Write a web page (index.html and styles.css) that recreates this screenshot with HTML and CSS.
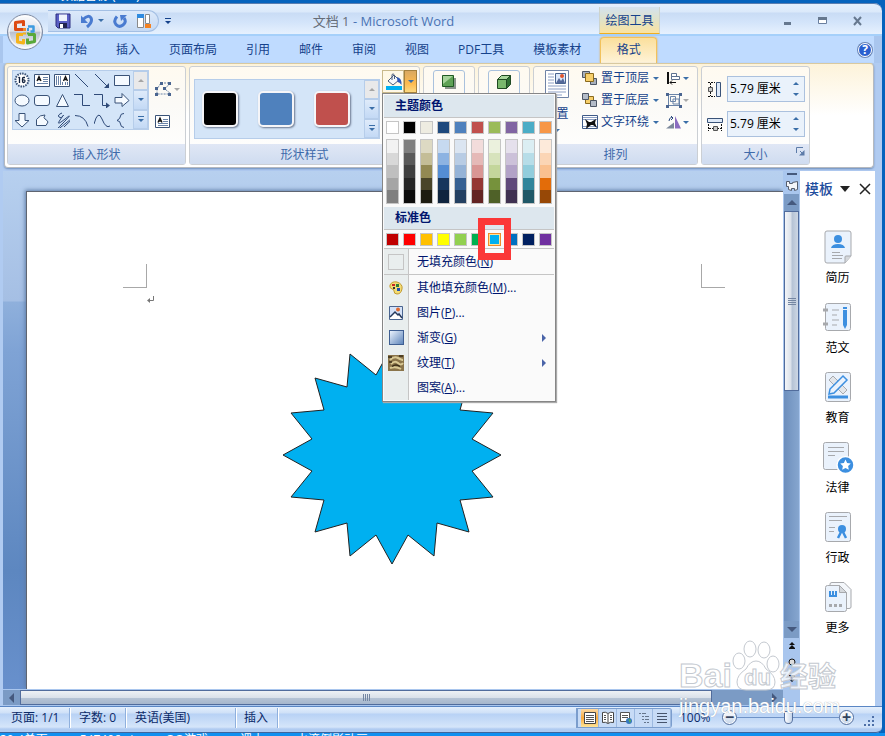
FILE: index.html
```html
<!DOCTYPE html>
<html lang="zh-CN">
<head>
    <meta charset="UTF-8">
    <meta name="viewport" content="width=device-width, initial-scale=1.0">
    <title>文档 1 - Microsoft Word</title>
    <link rel="stylesheet" href="styles.css">
</head>
<body>
    <div class="desktop-top"><span>数据备份 (001)</span></div>

    <div class="window">
        <!-- Title bar -->
        <header class="titlebar">
            <button class="office" aria-label="Office">
                <svg width="38" height="38" viewBox="0 0 38 38">
                    <defs>
                        <linearGradient id="orb" x1="0" y1="0" x2="0" y2="1">
                            <stop offset="0" stop-color="#fdfdfe"/>
                            <stop offset=".48" stop-color="#dde1ea"/>
                            <stop offset=".5" stop-color="#b9c0d0"/>
                            <stop offset="1" stop-color="#fafbfd"/>
                        </linearGradient>
                    </defs>
                    <circle cx="19" cy="19" r="17.500" fill="url(#orb)" stroke="#7e8ba3"/>
                    <circle cx="19" cy="19" r="16" fill="none" stroke="#fff" opacity=".8"/>
                    <g fill="none" stroke-width="3" stroke-linejoin="round">
                        <path d="M17 16.500H9.500V9.500L17.500 8.500V13" stroke="#dd4a12"/>
                        <path d="M22 13.500H27.500V18.500H24.500" stroke="#3d9be0" stroke-width="2.500"/>
                        <path d="M17 21.500H11.500V29L17.500 30V26" stroke="#f5b31c"/>
                        <path d="M22 21.500H28.500V28.500L21.500 30V25.500" stroke="#5aa93a"/>
                    </g>
                    <path d="M17 15h3v3h-3z" fill="#f08a2a"/>
                    <path d="M21 15h2v3h-2z" fill="#3d9be0"/>
                    <path d="M17 19.500h3v2h-3z" fill="#f5b31c"/>
                    <path d="M21 19.500h2v2h-2z" fill="#5aa93a"/>
                </svg>
            </button>
            <div class="quick">
                <button aria-label="保存">
                    <svg width="16" height="16" viewBox="0 0 16 16">
                        <path d="M1 1h14v14H3l-2-2z" fill="#5a5fc4" stroke="#2c2f80"/>
                        <path d="M4 1.500h8V8H4z" fill="#eef3fc"/>
                        <path d="M4 10h8v5H4z" fill="#1f2350"/>
                        <path d="M5 11h3v4H5z" fill="#fff"/>
                    </svg>
                </button>
                <button class="undo" aria-label="撤消">
                    <svg width="14" height="16" viewBox="0 0 14 16">
                        <path d="M3 6.500Q9 1 11 5T7 14" fill="none" stroke="#4a7bd0" stroke-width="3"/>
                        <path d="M1 2.500V10h7z" fill="#4a7bd0"/>
                    </svg>
                    <i class="arrow"></i>
                </button>
                <button aria-label="重复">
                    <svg width="14" height="16" viewBox="0 0 14 16">
                        <path d="M4 3.500Q0 8 3 11.500T10 12T11 5" fill="none" stroke="#4a7bd0" stroke-width="3"/>
                        <path d="M7 2h7l-6 6z" fill="#4a7bd0"/>
                    </svg>
                </button>
                <button aria-label="布局">
                    <svg width="16" height="16" viewBox="0 0 16 16">
                        <path d="M1.500 1.500h6v13h-6zM9.500 1.500h4v9h-4z" fill="#fff" stroke="#8a8a8a"/>
                        <path d="M1 1h7v4H1z" fill="#2f8be0"/>
                        <path d="M9 11h6v4H9z" fill="#f58220"/>
                    </svg>
                </button>
            </div>
            <button class="customize" aria-label="自定义快速访问工具栏"><i class="bar"></i><i class="arrow"></i></button>
            <h1 class="title"><span>文档 1</span> - Microsoft Word</h1>
            <div class="context">绘图工具</div>
            <div class="controls">
                <button aria-label="最小化"><svg width="12" height="12"><path d="M2 7h7v3H2z" fill="#66788f"/></svg></button>
                <button aria-label="最大化"><svg width="12" height="12"><path d="M1.500 2.500h8v6h-8z" fill="#fff" stroke="#6a7f9f"/><path d="M1 2h9v3H1z" fill="#66788f"/></svg></button>
                <button aria-label="关闭"><svg width="12" height="12"><path d="M2 2l7 8M9 2L2 10" stroke="#66788f" stroke-width="2"/></svg></button>
            </div>
        </header>

        <!-- Ribbon tabs -->
        <nav class="tabs">
            <a href="#">开始</a>
            <a href="#">插入</a>
            <a href="#">页面布局</a>
            <a href="#">引用</a>
            <a href="#">邮件</a>
            <a href="#">审阅</a>
            <a href="#">视图</a>
            <a href="#">PDF工具</a>
            <a href="#">模板素材</a>
            <a href="#" class="active">格式</a>
            <button class="help" aria-label="帮助">?</button>
        </nav>

        <!-- Ribbon -->
        <div class="ribbon">
            <section class="group insert">
                <div class="group-body">
                    <div class="gallery shapes">
                        <div class="shape-grid">
                            <button aria-label="十六角星"><svg width="16" height="16" viewBox="0 0 16 16"><circle cx="8" cy="8" r="6.500" fill="#fff" stroke="#3a5378" stroke-width="2" stroke-dasharray="1.500 1"/><path d="M5.500 5v6M4.500 6l1-1M11 5.500H9.500Q8.500 5.500 8.500 7v2.500Q8.500 10.500 9.700 10.500T11 9T8.500 8" fill="none" stroke="#10203c" stroke-width="1.300"/></svg></button>
                            <button aria-label="文本框"><svg width="16" height="16" viewBox="0 0 16 16"><path d="M.5 2.500h15v12H.5z" fill="#fff" stroke="#3a5378"/><path d="M3 9l2-4.500L7 9M4 7.500h2" fill="none" stroke="#111" stroke-width="1.300"/><path d="M9 5.500h5M9 7.500h5M9 9.500h5M3 11.500h11" stroke="#6a84a8"/></svg></button>
                            <button aria-label="竖排文本框"><svg width="16" height="16" viewBox="0 0 16 16"><path d="M.5 2.500h15v12H.5z" fill="#fff" stroke="#3a5378"/><path d="M9.500 9l2-4.500L13.500 9M10 7.500h3" fill="none" stroke="#111" stroke-width="1.300"/><path d="M2.500 4v9M4.500 4v9M6.500 4v9M8.500 10v3M11.500 10v3M13.500 10v3" stroke="#6a84a8"/></svg></button>
                            <button aria-label="直线"><svg width="16" height="16" viewBox="0 0 16 16"><path d="M1 2l13 13" stroke="#2f4a78"/></svg></button>
                            <button aria-label="箭头"><svg width="16" height="16" viewBox="0 0 16 16"><path d="M1 2l12 12" stroke="#2f4a78"/><path d="M15 16v-5l-5 5z" fill="#2f4a78"/></svg></button>
                            <button aria-label="矩形"><svg width="16" height="16" viewBox="0 0 16 16"><path d="M.5 3.500h15v10H.5z" fill="#f5faff" stroke="#3a5378"/></svg></button>
                            <button aria-label="椭圆"><svg width="16" height="16" viewBox="0 0 16 16"><ellipse cx="8" cy="8.500" rx="7" ry="5.500" fill="#f5faff" stroke="#3a5378"/></svg></button>
                            <button aria-label="圆角矩形"><svg width="16" height="16" viewBox="0 0 16 16"><rect x=".5" y="3.500" width="15" height="10" rx="2.500" fill="#f5faff" stroke="#3a5378"/></svg></button>
                            <button aria-label="三角形"><svg width="16" height="16" viewBox="0 0 16 16"><path d="M8.500 2.500l6 12h-12z" fill="#f5faff" stroke="#3a5378"/></svg></button>
                            <button aria-label="肘形连接符"><svg width="16" height="16" viewBox="0 0 16 16"><path d="M0 2.500h8.500v11H16" fill="none" stroke="#2f4a78"/></svg></button>
                            <button aria-label="肘形箭头"><svg width="16" height="16" viewBox="0 0 16 16"><path d="M0 2.500h8.500v11H14" fill="none" stroke="#2f4a78"/><path d="M12 10.500v6l4-3z" fill="#2f4a78"/></svg></button>
                            <button aria-label="右箭头"><svg width="16" height="16" viewBox="0 0 16 16"><path d="M1 5.500h7v-4l7 7-7 6v-3.500H1z" fill="#f5faff" stroke="#3a5378"/></svg></button>
                            <button aria-label="下箭头"><svg width="16" height="16" viewBox="0 0 16 16"><path d="M5 1.500h6v7h4l-7 6.500-7-6.500h4z" fill="#f5faff" stroke="#3a5378"/></svg></button>
                            <button aria-label="任意多边形"><svg width="16" height="16" viewBox="0 0 16 16"><path d="M2.500 13.500V7.500Q6 2.500 11 3q-2 3 0 4t3 3l-2 3.500z" fill="#f5faff" stroke="#3a5378"/></svg></button>
                            <button aria-label="自由曲线"><svg width="16" height="16" viewBox="0 0 16 16"><path d="M8 1Q3 3 5 5T9 4 6 8 11 7 8 12 12 11 10 15" fill="none" stroke="#2f4a78"/></svg></button>
                            <button aria-label="弧形"><svg width="16" height="16" viewBox="0 0 16 16"><path d="M1 3.500q10 0 13 11" fill="none" stroke="#2f4a78"/></svg></button>
                            <button aria-label="曲线"><svg width="16" height="16" viewBox="0 0 16 16"><path d="M0 12Q4-3 8 7t8 7" fill="none" stroke="#2f4a78"/></svg></button>
                            <button aria-label="左大括号"><svg width="16" height="16" viewBox="0 0 16 16"><path d="M10 1.500Q6.500 1.500 6.500 4T3 8.500Q6.500 9 6.500 12T10 15.500" fill="none" stroke="#2f4a78"/></svg></button>
                        </div>
                        <div class="scroller">
                            <button class="off" aria-label="上一行"><i class="arrow up"></i></button>
                            <button aria-label="下一行"><i class="arrow"></i></button>
                            <button aria-label="其他"><i class="bar"></i><i class="arrow"></i></button>
                        </div>
                    </div>
                    <div class="insert-tools">
                        <button aria-label="编辑形状">
                            <svg width="17" height="16" viewBox="0 0 17 16"><path d="M6 2h9L10 8l6 5H2V8z" fill="none" stroke="#6a84a8" stroke-dasharray="2 1"/><path d="M5 1h3v3H5zM13 1h3v3h-3zM0 6h3v3H0zM8 6h3v3H8zM0 12h3v3H0zM13 12h3v3h-3z" fill="#4a6590"/></svg>
                            <i class="arrow dim"></i>
                        </button>
                        <button aria-label="文本框">
                            <svg width="16" height="16" viewBox="0 0 16 16"><path d="M.5 1.500h14v12H.5z" fill="#fff" stroke="#3a5378"/><path d="M3 8.500l2-4.500L7 8.500M4 7h2" fill="none" stroke="#111" stroke-width="1.300"/><path d="M8 5.500h5M8 7.500h5M3 9.500h10M3 11.500h10" stroke="#6a84a8"/></svg>
                        </button>
                    </div>
                </div>
                <h2>插入形状</h2>
            </section>

            <section class="group styles">
                <div class="group-body">
                    <div class="gallery style-gallery">
                        <div class="style-list">
                            <button class="style black" aria-label="黑色"></button>
                            <button class="style blue" aria-label="蓝色"></button>
                            <button class="style red" aria-label="红色"></button>
                        </div>
                        <div class="scroller">
                            <button class="off" aria-label="上一行"><i class="arrow up"></i></button>
                            <button aria-label="下一行"><i class="arrow"></i></button>
                            <button aria-label="其他"><i class="bar"></i><i class="arrow"></i></button>
                        </div>
                    </div>
                    <div class="fill">
                        <button class="fill-main" aria-label="形状填充">
                            <svg width="18" height="20" viewBox="0 0 18 20">
                                <path d="M3 9l6-6 5 5-6 5z" fill="#f4f7fb" stroke="#4b5d7c"/>
                                <path d="M7 8V2.500Q8 1 9.500 3v4" fill="none" stroke="#4b5d7c"/>
                                <path d="M12 5q5 1 4.500 8-2-3-4-3z" fill="#2e57b8"/>
                                <path d="M1 14h16v4H1z" fill="#00b0f0"/>
                            </svg>
                        </button>
                        <button class="fill-more" aria-label="更多填充"><i class="arrow"></i></button>

                        <!-- Fill colour menu -->
                        <div class="menu">
                            <h3>主题颜色</h3>
                            <div class="swatches" id="themeColors"></div>
                            <div class="swatches shades" id="themeShades"></div>
                            <h3>标准色</h3>
                            <div class="swatches" id="standardColors"></div>
                            <button class="item nofill"><span class="pic"><i class="none"></i></span><span>无填充颜色(<u>N</u>)</span></button>
                            <button class="item">
                                <span class="pic"><svg width="16" height="16" viewBox="0 0 16 16"><path d="M2 5Q4 1 9 2q6 2 5 7-1 5-5 5-3 0-3-3 0-2-2-2-3-1-2-4z" fill="#f3dc74" stroke="#c29a30"/><path d="M4 4h3v2H4z" fill="#c62828"/><path d="M8 4h3v3H8z" fill="#2e7d32"/><path d="M5 7h2v2H5z" fill="#333"/><path d="M9 8h3v3H9z" fill="#1e4fb0"/></svg></span>
                                <span>其他填充颜色(<u>M</u>)...</span>
                            </button>
                            <button class="item">
                                <span class="pic"><svg width="16" height="16" viewBox="0 0 16 16"><path d="M1.500 1.500h13v13h-13z" fill="#d5e2f8" stroke="#4a6590"/><path d="M2 12l5-5 3 3 2-2 2 4v2H2z" fill="#fff"/><path d="M2 12l5-5 3 3 1-1 3 4" fill="none" stroke="#26395c" stroke-width="1.500"/><circle cx="10" cy="4.500" r="2" fill="#e06a30"/></svg></span>
                                <span>图片(<u>P</u>)...</span>
                            </button>
                            <button class="item">
                                <span class="pic"><i class="gradient"></i></span>
                                <span>渐变(<u>G</u>)</span><i class="sub"></i>
                            </button>
                            <button class="item">
                                <span class="pic"><svg width="16" height="16" viewBox="0 0 16 16"><path d="M0 0h16v16H0z" fill="#8a744a"/><path d="M2 5q4-4 8-2t5 2M3 9q4-4 7-1t5 0M2 13q6-2 11 1" fill="none" stroke="#d9c994" stroke-width="2"/><path d="M0 2h4M11 1h4M4 11.500q4-3 8 0M1 7h3" fill="none" stroke="#3b2e18" stroke-width="1.500"/></svg></span>
                                <span>纹理(<u>T</u>)</span><i class="sub"></i>
                            </button>
                            <button class="item"><span class="pic"></span><span>图案(<u>A</u>)...</span></button>
                        </div>
                    </div>
                </div>
                <h2>形状样式</h2>
            </section>

            <section class="group effect">
                <div class="group-body">
                    <button class="effect-button" aria-label="阴影效果"><svg width="16" height="16" viewBox="0 0 16 16"><path d="M4 4h11v11H4z" fill="#8c958c"/><path d="M1.500 1.500h11v11h-11z" fill="#5fa255" stroke="#1f5a22"/><path d="M2 2h10L2 10z" fill="#a6d39a"/></svg></button>
                </div>
                <h2></h2>
            </section>

            <section class="group effect">
                <div class="group-body">
                    <button class="effect-button" aria-label="三维效果"><svg width="16" height="16" viewBox="0 0 16 16"><path d="M1.500 5.500h9v9h-9z" fill="#79b86c" stroke="#1f4a22"/><path d="M1.500 5.500l4-4h9l-4 4z" fill="#a8d69c" stroke="#1f4a22"/><path d="M10.500 5.500l4-4v9l-4 4z" fill="#2f7033" stroke="#1f4a22"/></svg></button>
                </div>
                <h2></h2>
            </section>

            <section class="group arrange">
                <div class="group-body">
                    <button class="position">
                        <svg width="24" height="28" viewBox="0 0 24 28"><path d="M.5.5h23v27H.5z" fill="#fff" stroke="#6f83a6"/><path d="M3 4h6M3 7h6M3 10h6M3 13h6M3 16h18M3 19h18M3 22h18M3 25h14" stroke="#8c9fc4"/><path d="M10.500 3.500h10v10h-10z" fill="#dce8fa" stroke="#4a6590"/><path d="M11 13l3-5 2 3 2-3 2 5z" fill="#54699a"/><circle cx="17" cy="6" r="2" fill="#e0562e"/></svg>
                        <span>位置</span>
                        <i class="arrow"></i>
                    </button>
                    <div class="rows">
                        <button><svg width="16" height="16" viewBox="0 0 16 16"><path d="M.5 1.500h7v6h-7zM8.500 8.500h6v6h-6z" fill="#a8b0bc" stroke="#4d5665"/><path d="M3.500 3.500h8v8h-8z" fill="#f7cf6a" stroke="#8a6a1e"/></svg><span>置于顶层</span><i class="arrow"></i></button>
                        <button><svg width="16" height="16" viewBox="0 0 16 16"><path d="M3.500 4.500h8v7h-8z" fill="#f7cf6a" stroke="#8a6a1e"/><path d="M.5 1.500h6v6h-6zM8.500 8.500h6v6h-6z" fill="#b4bcc8" stroke="#4d5665"/></svg><span>置于底层</span><i class="arrow"></i></button>
                        <button><svg width="16" height="16" viewBox="0 0 16 16"><path d="M.5 1.500h15v13H.5z" fill="#fff" stroke="#3f5a88"/><path d="M1 3.500h14M1 5.500h14M1 12.500h14" stroke="#8c9fc4"/><path d="M3 5l4 3 2 0 5-3-1 4 2 5-4-3-2 0-5 4 1-5z" fill="#111"/></svg><span>文字环绕</span><i class="arrow"></i></button>
                    </div>
                    <div class="rows">
                        <button aria-label="对齐"><svg width="16" height="16" viewBox="0 0 16 16"><path d="M2 2v12" stroke="#111" stroke-width="2"/><path d="M5.500 3.500h5v3h-5zM5.500 9.500h8v-3h-8z" fill="#fff" stroke="#5d718f"/><path d="M4 12.500h6M6 10.500l-2 2 2 2" fill="none" stroke="#111"/></svg><i class="arrow"></i></button>
                        <button aria-label="组合"><svg width="16" height="16" viewBox="0 0 16 16"><path d="M2.500 2.500h11v11h-11zM4.500 4.500h5v5h-5zM7 7h6v5H7z" fill="none" stroke="#6a84a8"/><path d="M0 1h3v3H0zM13 1h3v3h-3zM0 13h3v3H0zM13 13h3v3h-3z" fill="#4a6590"/></svg><i class="arrow dim"></i></button>
                        <button aria-label="旋转"><svg width="16" height="16" viewBox="0 0 16 16"><path d="M0 14.500l8-6v6z" fill="#7c889a"/><path d="M9 14.500V2l6 12.500z" fill="#8b6cc0"/><path d="M3 7q1-5 4-3M5 2l2 2-2 2" fill="none" stroke="#27477c"/></svg><i class="arrow"></i></button>
                    </div>
                </div>
                <h2>排列</h2>
            </section>

            <section class="group size">
                <div class="group-body">
                    <div class="field">
                        <label for="shapeHeight" aria-label="高度"><svg width="16" height="16" viewBox="0 0 16 16"><path d="M9.500 1.500h4v14h-4z" fill="#dfeaf8" stroke="#3a5378"/><path d="M1 1.500h7M1 15.500h7M3.500 2v4M3.500 11v4" stroke="#111" stroke-dasharray="2 1"/><path d="M1.500 6.500h4v4h-4z" fill="#ccc" stroke="#555"/></svg></label>
                        <div class="spin">
                            <input type="text" id="shapeHeight" value="5.79 厘米">
                            <div class="steps"><button aria-label="增加"><i class="arrow up"></i></button><button aria-label="减少"><i class="arrow"></i></button></div>
                        </div>
                    </div>
                    <div class="field">
                        <label for="shapeWidth" aria-label="宽度"><svg width="16" height="16" viewBox="0 0 16 16"><path d="M.5 2.500h15v4H.5z" fill="#dfeaf8" stroke="#3a5378"/><path d="M1.500 8v7M14.500 8v7M2 12.500h4M10 12.500h4" stroke="#111" stroke-dasharray="2 1"/><path d="M6.500 10.500h4v4h-4z" fill="#ccc" stroke="#555"/></svg></label>
                        <div class="spin">
                            <input type="text" id="shapeWidth" value="5.79 厘米">
                            <div class="steps"><button aria-label="增加"><i class="arrow up"></i></button><button aria-label="减少"><i class="arrow"></i></button></div>
                        </div>
                    </div>
                </div>
                <h2>大小
                    <button class="launcher" aria-label="大小设置"><svg width="9" height="9" viewBox="0 0 9 9"><path d="M.5 6V.5H7M4 4l3 3" fill="none" stroke="#5c7ba8"/><path d="M8.500 3v5.500H3z" fill="#5c7ba8"/></svg></button>
                </h2>
            </section>
        </div>

        <!-- Workspace -->
        <div class="workspace">
            <main class="editor">
                <div class="canvas">
                    <div class="page">
                        <div class="margins"><i class="corner left"></i><i class="corner right"></i></div>
                        <svg class="mark" width="8" height="8" viewBox="0 0 8 8"><path d="M6.500 0v4.500H2" fill="none" stroke="#777"/><path d="M0 4.500L3 2v5z" fill="#777"/></svg>
                        <svg class="star" width="220" height="220" viewBox="-110 -110 220 220">
                            <polygon fill="#00b0f0" stroke="#222" points="109,0 80,16 101,42 68,45 77,77 45,68 42,101 16,80 0,109 -16,80 -42,101 -45,68 -77,77 -68,45 -101,42 -80,16 -109,0 -80,-16 -101,-42 -68,-45 -77,-77 -45,-68 -42,-101 -16,-80 0,-109 16,-80 42,-101 45,-68 77,-77 68,-45 101,-42 80,-16"/>
                        </svg>
                    </div>
                </div>
                <div class="hscroll">
                    <button aria-label="向左"><i class="tri left"></i></button>
                    <div class="hthumb"><i></i><i></i><i></i><i></i></div>
                    <button aria-label="向右"><i class="tri right"></i></button>
                </div>
            </main>

            <div class="vscroll">
                <i class="split"></i>
                <button class="ruler" aria-label="标尺"><svg width="14" height="14" viewBox="0 0 14 14"><path d="M1.500 2.500h3v2h3v-1l5-1v8l-3 1v-2h-3v2l-3-1v-3h-2z" fill="#f3f5f9" stroke="#555d6d"/></svg></button>
                <button class="vup" aria-label="向上"><i class="tri top"></i></button>
                <div class="vtrack"><div class="vthumb"><i></i><i></i><i></i><i></i></div></div>
                <button class="vdown" aria-label="向下"><i class="tri down"></i></button>
                <div class="browse">
                    <button aria-label="前一页"><svg width="8" height="10" viewBox="0 0 8 10"><path d="M4 1l3 3H1zM4 4l3 3H1zM1 7h6v1H1z" fill="#111"/></svg></button>
                    <button aria-label="选择浏览对象"><svg width="8" height="8" viewBox="0 0 8 8"><circle cx="4" cy="4" r="3" fill="#ddd" stroke="#111"/></svg></button>
                    <button aria-label="下一页"><svg width="8" height="10" viewBox="0 0 8 10"><path d="M4 9L1 6h6zM4 6L1 3h6zM1 2h6v1H1z" fill="#111"/></svg></button>
                </div>
            </div>

            <!-- Template pane -->
            <aside class="pane">
                <div class="pane-head">
                    <button class="pane-title">模板 <svg width="10" height="6"><path d="M0 0h10L5 6z" fill="#222"/></svg></button>
                    <button aria-label="关闭"><svg width="12" height="12"><path d="M1 1l10 10M11 1L1 11" stroke="#222" stroke-width="1.500"/></svg></button>
                </div>
                <ul>
                    <li><a href="#"><svg width="32" height="34" viewBox="0 0 32 34"><path d="M3 3q0-2 2-2h22q2 0 2 2v23l-6 7H5q-2 0-2-2z" fill="#eaf2fc" stroke="#a7a9ad"/><path d="M29 26h-5q-1 0-1 1v6" fill="#d5d8dc" stroke="#a7a9ad"/><circle cx="16" cy="9" r="4" fill="#3c8fe0"/><path d="M9 18q1-4 7-4t7 4z" fill="#3c8fe0"/><path d="M10 22.500h8M10 25.500h11M10 28.500h10" stroke="#a7a9ad"/></svg>简历</a></li>
                    <li><a href="#"><svg width="32" height="34" viewBox="0 0 32 34"><rect x="3.500" y="3.500" width="25" height="27" rx="2" fill="#eaf2fc" stroke="#a7a9ad"/><path d="M1 10h5M1 24h5" stroke="#a7a9ad" stroke-width="3"/><path d="M10 10h7M10 15h5M10 20h7M10 25h5" stroke="#a7a9ad"/><path d="M21 7h4v2h-4zM21 10h4v15l-2 4-2-4z" fill="#3c8fe0"/></svg>范文</a></li>
                    <li><a href="#"><svg width="32" height="34" viewBox="0 0 32 34"><rect x="3.500" y="2.500" width="25" height="29" rx="2" fill="#eaf2fc" stroke="#a7a9ad"/><path d="M11 6l14 14-4 4L7 10z" fill="#e3e6ea" stroke="#a7a9ad"/><path d="M21 6l4 4-13 13-5 1 1-5z" fill="#eaf2fc" stroke="#3c8fe0" stroke-width="1.500"/><path d="M6 27h20" stroke="#3c8fe0" stroke-width="3"/></svg>教育</a></li>
                    <li><a href="#"><svg width="32" height="34" viewBox="0 0 32 34"><rect x="1.500" y="2.500" width="25" height="27" rx="2" fill="#eaf2fc" stroke="#a7a9ad"/><path d="M6 7.500h16M6 11.500h16M6 15.500h7" stroke="#a7a9ad"/><circle cx="23.500" cy="25" r="8.500" fill="#3c8fe0" stroke="#fff" stroke-width="1.500"/><path d="M23.500 19.500l1.600 3.400 3.700.5-2.700 2.600.7 3.700-3.300-1.800-3.300 1.800.7-3.700-2.700-2.600 3.700-.5z" fill="#fff"/></svg>法律</a></li>
                    <li><a href="#"><svg width="32" height="34" viewBox="0 0 32 34"><rect x="3.500" y="2.500" width="25" height="29" rx="2" fill="#eaf2fc" stroke="#a7a9ad"/><path d="M7 6.500h18M7 10.500h13M7 17.500h6M7 21.500h5" stroke="#a7a9ad"/><circle cx="20" cy="19" r="4" fill="#3c8fe0"/><path d="M19 22l-3 6M21 22l3 6" stroke="#3c8fe0" stroke-width="2.500"/></svg>行政</a></li>
                    <li><a href="#"><svg width="32" height="34" viewBox="0 0 32 34"><path d="M8 5V4q0-1.500 2-1.500h12l7 7V27q0 1.500-2 1.500h-3" fill="#f4f7fb" stroke="#a7a9ad"/><path d="M3.500 7.500q0-2 2-2h12l7 7v17q0 2-2 2h-17q-2 0-2-2z" fill="#eaf2fc" stroke="#a7a9ad"/><path d="M17.500 5.500v7h7z" fill="#d5d8dc" stroke="#a7a9ad"/><path d="M8 11v5h6v-5M11 11v5" fill="none" stroke="#3c8fe0" stroke-width="2"/><path d="M7 24h3v3H7zM12 24h3v3h-3zM17 24h3v3h-3z" fill="#a7a9ad"/></svg>更多</a></li>
                </ul>
            </aside>
        </div>

        <!-- Status bar -->
        <footer class="status">
            <button class="cell pages">页面: 1/1</button>
            <button class="cell words">字数: 0</button>
            <button class="cell language">英语(美国)</button>
            <button class="cell mode">插入</button>
            <div class="views">
                <button class="on" aria-label="页面视图"><svg width="12" height="14" viewBox="0 0 12 14"><path d="M.5 1.500h11v11H.5z" fill="#fff" stroke="#444"/><path d="M2 4.500h8M2 6.500h8M2 8.500h8M2 10.500h8" stroke="#555"/></svg></button>
                <button aria-label="阅读版式"><svg width="12" height="14" viewBox="0 0 12 14"><path d="M.5 1.500q3-1 5.500 1 2.500-2 5.500-1v10q-3-1-5.500 1-2.500-2-5.500-1zM6 3v9" fill="#fff" stroke="#444"/><path d="M2 4.500h2M2 6.500h2M2 8.500h2M8 4.500h2M8 6.500h2M8 8.500h2" stroke="#555"/></svg></button>
                <button aria-label="Web 版式"><svg width="12" height="14" viewBox="0 0 12 14"><path d="M.5 1.500h9v9h-9z" fill="#fff" stroke="#555"/><path d="M2 4.500h6M2 6.500h6" stroke="#555"/><circle cx="9" cy="10" r="3" fill="#3478c0"/><path d="M8 8l3 1-1 3z" fill="#5cb04e"/></svg></button>
                <button aria-label="大纲视图"><svg width="12" height="14" viewBox="0 0 12 14"><path d="M1 2.500h7M4 5.500h7M4 8.500h7M6 11.500h5" stroke="#65758c" stroke-dasharray="2 1 6"/></svg></button>
                <button aria-label="普通视图"><svg width="12" height="14" viewBox="0 0 12 14"><path d="M1 2.500h10M1 5.500h10M1 8.500h10M1 11.500h10" stroke="#46546c"/></svg></button>
            </div>
            <button class="percent">100%</button>
            <button class="round" aria-label="缩小">−</button>
            <input type="range" class="zoom" aria-label="缩放" min="0" max="100" value="50">
            <button class="round" aria-label="放大">+</button>
            <svg class="grip" width="12" height="12" viewBox="0 0 12 12"><path d="M9 1h2v2H9zM5 5h2v2H5zM9 5h2v2H9zM1 9h2v2H1zM5 9h2v2H5zM9 9h2v2H9z" fill="#4d6fa8"/></svg>
        </footer>
    </div>

    <div class="desktop-bottom"><span>30.4单页</span><span>547406.xi</span><span>QQ游戏</span><span>课本</span><span>水滴倒影动画</span></div>

    <div class="watermark">
        <div class="brand"><span>Bai</span>
            <svg width="48" height="52" viewBox="0 0 48 52"><g fill="#fff" fill-opacity=".7" stroke="#c4c9d0"><ellipse cx="7" cy="21" rx="6" ry="8"/><ellipse cx="18" cy="9" rx="6" ry="8"/><ellipse cx="32" cy="10" rx="6" ry="8"/><ellipse cx="41" cy="24" rx="6" ry="8"/><path d="M24 21q6 0 10 8 9 6 9 13 0 8-9 8H14q-9 0-9-8 0-7 9-13 4-8 10-8z"/></g></svg>
            <b>du</b><span class="cn">经验</span>
        </div>
        <div class="site">jingyan.baidu.com</div>
    </div>

    <script>
        const theme = ['#ffffff', '#000000', '#eeece1', '#1f497d', '#4f81bd', '#c0504d', '#9bbb59', '#8064a2', '#4bacc6', '#f79646'];
        const shades = [
            ['#f2f2f2', '#d8d8d8', '#bfbfbf', '#a5a5a5', '#7f7f7f'],
            ['#7f7f7f', '#595959', '#3f3f3f', '#262626', '#0c0c0c'],
            ['#ddd9c3', '#c4bd97', '#938953', '#494429', '#1d1b10'],
            ['#c6d9f0', '#8db3e2', '#548dd4', '#17365d', '#0f243e'],
            ['#dbe5f1', '#b8cce4', '#95b3d7', '#366092', '#244061'],
            ['#f2dcdb', '#e5b9b7', '#d99694', '#953734', '#632423'],
            ['#ebf1dd', '#d7e3bc', '#c3d69b', '#76923c', '#4f6128'],
            ['#e5e0ec', '#ccc1d9', '#b2a2c7', '#5f497a', '#3f3151'],
            ['#dbeef3', '#b7dde8', '#92cddc', '#31859b', '#205867'],
            ['#fdeada', '#fbd5b5', '#fac08f', '#e36c09', '#974806']
        ];
        const standard = ['#c00000', '#ff0000', '#ffc000', '#ffff00', '#92d050', '#00b050', '#00b0f0', '#0070c0', '#002060', '#7030a0'];

        function swatch(color, selected) {
            const button = document.createElement('button');
            button.className = selected ? 'swatch selected' : 'swatch';
            button.style.backgroundColor = color;
            button.setAttribute('aria-label', color);
            return button;
        }

        theme.forEach(color => document.getElementById('themeColors').appendChild(swatch(color, false)));
        standard.forEach(color => document.getElementById('standardColors').appendChild(swatch(color, color === '#00b0f0')));

        shades.forEach(list => {
            const column = document.createElement('div');
            column.className = 'column';
            list.forEach(color => column.appendChild(swatch(color, false)));
            document.getElementById('themeShades').appendChild(column);
        });
    </script>
</body>
</html>
```

FILE: styles.css
```css
*, *::after {
    box-sizing: border-box;
}

body {
    margin: 0;
    height: 100vh;
    display: flex;
    flex-direction: column;
    background: #0563bd;
    font: 12px/16px "Open Sans", "Noto Sans CJK SC", sans-serif;
    color: #15428b;
    overflow: hidden;
}

button, input {
    font: inherit;
    color: inherit;
    background: none;
    border: 0;
    padding: 0;
    margin: 0;
}

a {
    color: inherit;
    text-decoration: none;
}

h1, h2, h3, ul {
    margin: 0;
    padding: 0;
    font-size: 12px;
    font-weight: normal;
    list-style: none;
}

svg {
    display: block;
    flex: none;
}

.arrow {
    display: block;
    flex: none;
    border: 3px solid transparent;
    border-top-color: #3a6ea8;
    border-bottom: 0;
}

.arrow.up {
    border-top: 0;
    border-bottom: 3px solid #3a6ea8;
}

.arrow.dim {
    border-top-color: #a9a9a9;
}

.bar {
    display: block;
    width: 6px;
    height: 1px;
    margin-bottom: 2px;
    background: #3a6ea8;
}

/* Desktop strips behind the window */
.desktop-top, .desktop-bottom {
    flex: none;
    height: 3px;
    overflow: hidden;
    color: #fff;
    line-height: 14px;
}

.desktop-top {
    display: flex;
    align-items: flex-end;
    padding-left: 61px;
}

.desktop-bottom {
    display: flex;
    gap: 32px;
    background: #1190f0;
}

.window {
    flex: 1;
    min-height: 0;
    display: flex;
    flex-direction: column;
    margin-right: 3px;
    border-radius: 0 8px 6px 0;
    background: #b0cbf1;
}

/* Title bar */
.titlebar {
    position: relative;
    display: flex;
    align-items: center;
    height: 33px;
    padding: 3px 18px 0 48px;
    border-top: 1px solid #5a7eb0;
    border-bottom: 2px solid #a5d0fa;
    border-radius: 0 8px 0 0;
    background: linear-gradient(#e3effd 0, #dbe9fa 8px, #c9dcf5 9px, #d3e4fa 60%, #e6f1fe 100%);
}

.office {
    position: absolute;
    left: 6px;
    top: 9px;
    z-index: 2;
}

.quick {
    display: flex;
    align-items: center;
    gap: 9px;
    width: 111px;
    height: 22px;
    padding-left: 7px;
    border: 1px solid #a3bfe4;
    border-left: 0;
    border-radius: 0 11px 11px 0;
    background: linear-gradient(#dce9fa, #c5d9f3);
}

.undo {
    display: flex;
    align-items: center;
    gap: 4px;
}

.customize {
    margin-left: 6px;
}

.customize .arrow {
    border-top-color: #15428b;
}

.customize .bar {
    background: #15428b;
}

.title {
    flex: 1;
    padding-right: 3px;
    text-align: center;
    color: #4a74b4;
    font-size: 13px;
    line-height: 22px;
}

.title span {
    color: #666d78;
}

.context {
    align-self: stretch;
    width: 61px;
    margin-right: 122px;
    border-left: 1px solid #cdd3cc;
    border-right: 1px solid #cdd3cc;
    border-bottom: 1px solid #f0ae20;
    background: linear-gradient(#d3e2ef, #e0e2c8 50%, #fbe3a0);
    text-align: center;
    line-height: 28px;
}

.controls {
    display: flex;
    gap: 23px;
}

/* Ribbon tabs */
.tabs {
    display: flex;
    align-items: stretch;
    gap: 29px;
    height: 27px;
    padding: 1px 2px 0 60px;
    border: solid #a9c6ee;
    border-width: 0 8px 0 3px;
    background: #bfdbff;
    line-height: 26px;
}

.tabs a {
    white-space: nowrap;
}

.tabs .active {
    width: 57px;
    margin-left: -10px;
    border: 1px solid #f2c25c;
    border-bottom: 0;
    border-radius: 4px 4px 0 0;
    background: linear-gradient(#fbdf9c, #fef3d8);
    box-shadow: 0 0 2px #e8a93a;
    text-align: center;
    line-height: 24px;
}

.help {
    align-self: center;
    width: 14px;
    height: 14px;
    margin-left: auto;
    border: 1px solid #fff;
    border-radius: 50%;
    background: #2a5fcf;
    box-shadow: 0 0 0 1px #6c87b8;
    color: #fff;
    font-weight: bold;
    line-height: 12px;
}

/* Ribbon */
.ribbon {
    display: flex;
    gap: 3px;
    height: 105px;
    margin: 0 8px 0 4px;
    padding: 2px;
    border: 1px solid #b5b9bf;
    border-top-color: #d8c9a0;
    border-radius: 4px;
    background: linear-gradient(#fdf3da, #fff 50%);
    box-shadow: 0 1px 2px #6f8fbb;
}

.group {
    display: flex;
    flex-direction: column;
    flex: none;
    border: 1px solid #cbcfd4;
    border-radius: 3px;
    background: linear-gradient(#fffaf0, #fbfaf7 40%, #fff);
}

.group-body {
    flex: 1;
    display: flex;
    min-height: 0;
    padding: 3px 4px;
}

.group h2 {
    position: relative;
    height: 20px;
    background: linear-gradient(#e0e7f5, #cfdcf0);
    color: #3e6aaa;
    text-align: center;
    line-height: 22px;
}

.insert {
    width: 179px;
}

.styles {
    width: 231px;
}

.effect {
    width: 52px;
}

.arrange {
    width: 165px;
}

.size {
    width: 109px;
}

.gallery {
    display: flex;
    height: 60px;
    border: 1px solid #b6cdea;
    background: #d4e5f8;
}

.shape-grid {
    display: grid;
    grid-template-columns: repeat(6, 20px);
    grid-template-rows: repeat(3, 20px);
    margin: -1px 0 0 -1px;
}

.shape-grid button {
    display: grid;
    place-items: center;
}

.scroller {
    display: flex;
    flex-direction: column;
    width: 15px;
    margin-left: auto;
}

.scroller button {
    flex: 1;
    display: flex;
    flex-direction: column;
    align-items: center;
    justify-content: center;
    border: 1px solid #b6cdea;
    background: linear-gradient(#dfebfa, #c3d9f5);
}

.scroller .off {
    background: #e9e9ea;
}

.scroller .off .arrow {
    border-bottom-color: #a5a5a5;
}

.shapes {
    width: 137px;
}

.insert-tools {
    display: flex;
    flex-direction: column;
    gap: 17px;
    padding: 11px 0 0 6px;
}

.insert-tools button {
    display: flex;
    align-items: center;
    gap: 2px;
}

.style-gallery {
    width: 186px;
    margin: 9px 2px 0 0;
}

.styles .group-body {
    padding-right: 2px;
}

.style-list {
    display: flex;
    align-items: center;
    gap: 20px;
    padding-left: 7px;
}

.style {
    width: 36px;
    height: 36px;
    border: 2px solid #f5f5f8;
    border-radius: 5px;
    box-shadow: 1px 1px 2px #6b7890;
}

.black {
    background: #000;
}

.blue {
    background: #4f81bd;
}

.red {
    background: #c0504d;
}

.fill {
    position: relative;
    display: flex;
    height: 23px;
    width: 35px;
}

.fill-main {
    width: 22px;
    padding-left: 2px;
    border: 1px solid #c9b98c;
    background: #fff8e6;
}

.fill-more {
    display: grid;
    place-items: center;
    width: 13px;
    border: 1px solid #a5813e;
    background: linear-gradient(#d9a862, #fdbb50 60%, #fbd982);
}

.effect-button {
    display: grid;
    place-items: center;
    width: 32px;
    height: 60px;
    margin-left: 5px;
    padding-bottom: 36px;
    border: 1px solid #a9c1dd;
    border-radius: 3px;
}

.position {
    display: flex;
    flex-direction: column;
    align-items: center;
    width: 37px;
}

.position span {
    margin: 8px 0 7px;
}

.rows {
    display: flex;
    flex-direction: column;
    gap: 6px;
    margin-left: 7px;
}

.rows button {
    display: flex;
    align-items: center;
    height: 16px;
    gap: 3px;
    white-space: nowrap;
}

.rows .arrow {
    margin-left: 1px;
}

.rows + .rows button {
    gap: 0;
}

.size .group-body {
    flex-direction: column;
    gap: 9px;
    padding: 9px 4px 0 5px;
}

.field {
    display: flex;
    align-items: center;
    gap: 4px;
}

.spin {
    flex: 1;
    display: flex;
    min-width: 0;
    height: 26px;
    border: 1px solid #abc1de;
    background: #eaf2fb;
}

.spin input {
    flex: 1;
    min-width: 0;
    padding-left: 2px;
    color: #000;
}

.steps {
    display: flex;
    flex-direction: column;
    justify-content: center;
    gap: 8px;
    padding-right: 5px;
}

.launcher {
    position: absolute;
    right: 4px;
    top: 3px;
}

/* Fill colour menu */
.menu {
    position: absolute;
    left: 0;
    top: 23px;
    z-index: 5;
    width: 174px;
    padding: 1px;
    border: 1px solid #868686;
    background: #fafafa;
    box-shadow: 1px 1px 1px #aaa;
    color: #00156e;
}

.menu h3 {
    height: 23px;
    padding-left: 11px;
    border-bottom: 1px solid #c5c5c5;
    background: #dde7ee;
    font-weight: bold;
    line-height: 22px;
}

.swatches {
    display: flex;
    gap: 4px;
    padding: 3px 2px 2px;
}

.swatch {
    width: 13px;
    height: 13px;
    border: 1px solid #c5c5c5;
}

.shades {
    padding: 3px 2px;
}

.column {
    display: flex;
    flex-direction: column;
    width: 13px;
    height: 65px;
    border: 1px solid #c5c5c5;
}

.column .swatch {
    flex: 1;
    width: 11px;
    border: 0;
}

.selected {
    position: relative;
    border: 1px solid #ef8b2c;
    box-shadow: inset 0 0 0 1px #ffe294;
}

/* Marker frame round the chosen colour */
.selected::after {
    content: "";
    position: absolute;
    left: -11px;
    top: -16px;
    width: 33px;
    height: 42px;
    border: 7px solid #fb3838;
}

.item {
    display: flex;
    align-items: center;
    gap: 8px;
    width: 100%;
    height: 25px;
    text-align: left;
    white-space: nowrap;
}

.nofill {
    height: 27px;
    border-top: 1px solid #c5c5c5;
    border-bottom: 1px solid #c5c5c5;
}

.pic {
    display: grid;
    place-items: center;
    align-self: stretch;
    width: 25px;
    border-right: 1px solid #c5c5c5;
    background: #e9eeee;
}

.none, .gradient {
    width: 16px;
    height: 16px;
    border: 1px solid #c5c5c5;
}

.gradient {
    width: 15px;
    height: 15px;
    border-color: #3f5f92;
    background: linear-gradient(135deg, #eaf2fc, #5f86bb);
}

.sub {
    margin: 0 8px 0 auto;
    border: 4px solid transparent;
    border-left-color: #4a64a8;
    border-right: 0;
}

/* Workspace */
.workspace {
    flex: 1;
    min-height: 0;
    display: flex;
    margin: 3px 7px 0 3px;
}

.editor {
    flex: 1;
    display: flex;
    flex-direction: column;
    min-width: 0;
}

.canvas {
    flex: 1;
    min-height: 0;
    padding: 20px 0 0 23px;
    background: linear-gradient(#b7d0ef 0, #a5bfe4 130px, #8fb0dc 131px, #7fa3d5 180px, #5d87c0 400px, #6890cc);
}

.page {
    height: 100%;
    border: solid #5f6571;
    border-width: 1px 0 0 1px;
    background: #fff;
    box-shadow: -1px -1px 4px #5f7ca6;
}

.margins {
    display: flex;
    justify-content: space-between;
    padding: 72px 58px 0 96px;
}

.corner {
    width: 24px;
    height: 24px;
    border: solid #a8a8a8;
    border-width: 0 0 1px 1px;
}

.corner.left {
    border-width: 0 1px 1px 0;
}

.mark {
    margin: 8px 0 0 120px;
}

.star {
    margin: 41px 0 0 255px;
}

.tri {
    display: block;
    border: 5px solid transparent;
}

.tri.left {
    border-right-color: #45597e;
    border-left: 0;
}

.tri.right {
    border-left-color: #45597e;
    border-right: 0;
}

.tri.top {
    border-bottom-color: #45597e;
    border-top: 0;
}

.tri.down {
    border-top-color: #45597e;
    border-bottom: 0;
}

.hscroll {
    flex: none;
    display: flex;
    height: 17px;
    border-top: 1px solid #a9c6ee;
    border-bottom: 1px solid #a9c6ee;
    background: #7b9bc5;
}

.hscroll button {
    width: 17px;
    display: grid;
    place-items: center;
}

.hthumb {
    flex: 1;
    display: flex;
    align-items: center;
    justify-content: center;
    gap: 1px;
    margin-right: 54px;
    border: 1px solid #516c9c;
    background: linear-gradient(#eef1f5, #dae1ea 50%, #b5c3d5 55%, #a6b6cc);
}

.hthumb i {
    width: 1px;
    height: 7px;
    background: #7486a2;
}

.vscroll {
    width: 17px;
    display: flex;
    flex-direction: column;
    align-items: center;
    background: #a9c6ee;
}

.split {
    width: 10px;
    height: 2px;
    margin: 2px 0 4px;
    background: #46597c;
}

.vup, .vdown {
    display: grid;
    place-items: center;
    width: 15px;
    height: 17px;
    background: #7b9bc5;
}

.vup {
    margin-top: 1px;
}

.vtrack {
    flex: 1;
    width: 15px;
    background: linear-gradient(90deg, #6d8fbd, #86a6cf);
}

.vthumb {
    display: flex;
    flex-direction: column;
    align-items: center;
    justify-content: center;
    gap: 1px;
    height: 44%;
    border: 1px solid #516c9c;
    background: linear-gradient(90deg, #f3f5f8, #dae1ea 45%, #b5c3d5 55%, #cdd7e4);
}

.vthumb i {
    width: 8px;
    height: 1px;
    background: #7486a2;
}

.browse {
    display: flex;
    flex-direction: column;
    align-items: center;
    gap: 7px;
    height: 68px;
    padding-top: 3px;
}

/* Template pane */
.pane {
    width: 75px;
    background: #fff;
    color: #000;
}

.pane-head {
    display: flex;
    justify-content: space-between;
    align-items: center;
    height: 35px;
    padding: 0 4px 0 5px;
}

.pane-title {
    display: flex;
    align-items: center;
    gap: 7px;
    color: #1f4e9e;
    font-size: 14px;
    font-weight: 500;
}

.pane ul {
    padding-top: 24px;
}

.pane a {
    display: flex;
    flex-direction: column;
    align-items: center;
    gap: 6px;
    height: 70px;
}

/* Status bar */
.status {
    display: flex;
    align-items: center;
    height: 27px;
    padding: 0 7px 4px 3px;
    border-top: 1px solid #5a86c4;
    border-bottom: 1px solid #3f659c;
    border-radius: 0 0 6px 0;
    background: linear-gradient(#e4effd 0, #cfe0f7 6px, #b8d2f5 7px, #d5e5fa 20px, #b0cbf1 22px);
    color: #0b2a68;
}

.cell {
    height: 20px;
    padding-left: 8px;
    border-right: 1px solid #8fb0dd;
    box-shadow: 1px 0 #fff;
    text-align: left;
    white-space: nowrap;
}

.pages {
    width: 67px;
}

.words {
    width: 56px;
    padding-left: 9px;
}

.language {
    width: 110px;
    padding-left: 9px;
}

.mode {
    width: 42px;
}

.views {
    display: flex;
    margin: 0 8px 0 auto;
    padding-left: 3px;
    border: 1px solid #7b9dcd;
    border-left-width: 2px;
    border-radius: 0 3px 3px 0;
    background: #c7dbf6;
}

.views button {
    display: grid;
    place-items: center;
    width: 18px;
    height: 18px;
    border-right: 1px solid #9db9e0;
}

.views .on {
    background: linear-gradient(#fbd9a5, #f9a93c 50%, #fde59a);
}

.percent {
    width: 42px;
    text-align: left;
}

.round {
    width: 15px;
    height: 15px;
    border: 1px solid #56719f;
    border-radius: 50%;
    background: linear-gradient(#fff, #c5d5ea);
    box-shadow: inset 0 0 0 1px #fff;
    color: #33435e;
    font-size: 16px;
    font-weight: bold;
    line-height: 11px;
}

.zoom {
    appearance: none;
    width: 102px;
    height: 16px;
    background: linear-gradient(#6f93c8, #6f93c8) center / 100% 1px no-repeat;
}

.zoom::-webkit-slider-thumb {
    appearance: none;
    width: 9px;
    height: 13px;
    border: 1px solid #56719f;
    border-radius: 1px 1px 5px 5px;
    background: linear-gradient(90deg, #fff, #c5d5ea);
}

.grip {
    margin: 6px 0 0 9px;
}

/* Watermark */
.watermark {
    position: absolute;
    right: 48px;
    bottom: 18px;
    z-index: 10;
    width: 158px;
    color: rgba(255, 255, 255, .75);
    font-family: "Liberation Sans", "Noto Sans CJK SC", sans-serif;
    pointer-events: none;
}

.brand {
    position: relative;
    display: flex;
    align-items: flex-end;
    font-size: 34px;
    font-weight: bold;
    line-height: 34px;
    -webkit-text-stroke: 1px #c4c9d0;
}

.brand .cn {
    font-size: 28px;
    line-height: 28px;
    white-space: nowrap;
}

.brand b {
    position: absolute;
    left: 65px;
    bottom: 2px;
    font-size: 22px;
    line-height: 24px;
}

.site {
    margin-top: 2px;
    color: #fff;
    font-size: 20px;
    line-height: 24px;
    text-shadow: 0 0 1px #8a97aa;
}
```
